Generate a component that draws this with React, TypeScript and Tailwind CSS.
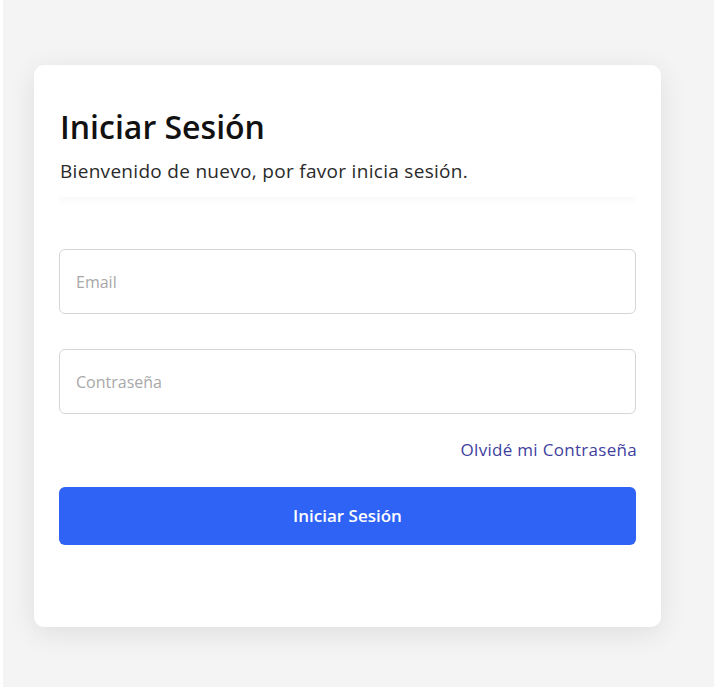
import React from "react";

export default function App() {
  return (
    <div className="w-[714px] h-[690px] bg-white pl-[3px] pb-[3px] flex">
      <div className="flex-1 bg-[#f4f4f4] pt-[65px] pl-[31px]">
        <div className="w-[627px] h-[562px] bg-white rounded-[10px] shadow-[0_6px_28px_rgba(0,0,0,0.09)] px-[25px] pt-[42px] flex flex-col font-['Open_Sans',sans-serif]">
          <h1 className="pl-[1px] text-[32px] leading-[40px] font-semibold text-[#111] tracking-[0px]">Iniciar Sesión</h1>
          <p className="pl-[1px] mt-[12px] text-[19px] leading-[24px] text-[#2a2a2a] tracking-[0.3px]">Bienvenido de nuevo, por favor inicia sesión.</p>
          <div className="mt-[14px] h-[8px] bg-gradient-to-b from-[#fafafa] to-white" />
          <div className="mt-[44px] flex flex-col gap-[35px]">
            <input
              placeholder="Email"
              className="h-[65px] w-full rounded-[6px] border border-[#d6d6d6] px-[16px] text-[16px] placeholder:text-[#a8a8a8] outline-none"
            />
            <input
              placeholder="Contraseña"
              className="h-[65px] w-full rounded-[6px] border border-[#d6d6d6] px-[16px] text-[16px] placeholder:text-[#a8a8a8] outline-none"
            />
          </div>
          <div className="mt-[25px] flex justify-end">
            <a className="text-[17px] leading-[22px] text-[#3f3fa0] tracking-[0.3px] mr-[-1px]">Olvidé mi Contraseña</a>
          </div>
          <button className="mt-[26px] h-[58px] w-full rounded-[6px] bg-[#2f63f6] text-white text-[17px] font-semibold">
            Iniciar Sesión
          </button>
        </div>
      </div>
    </div>
  );
}
